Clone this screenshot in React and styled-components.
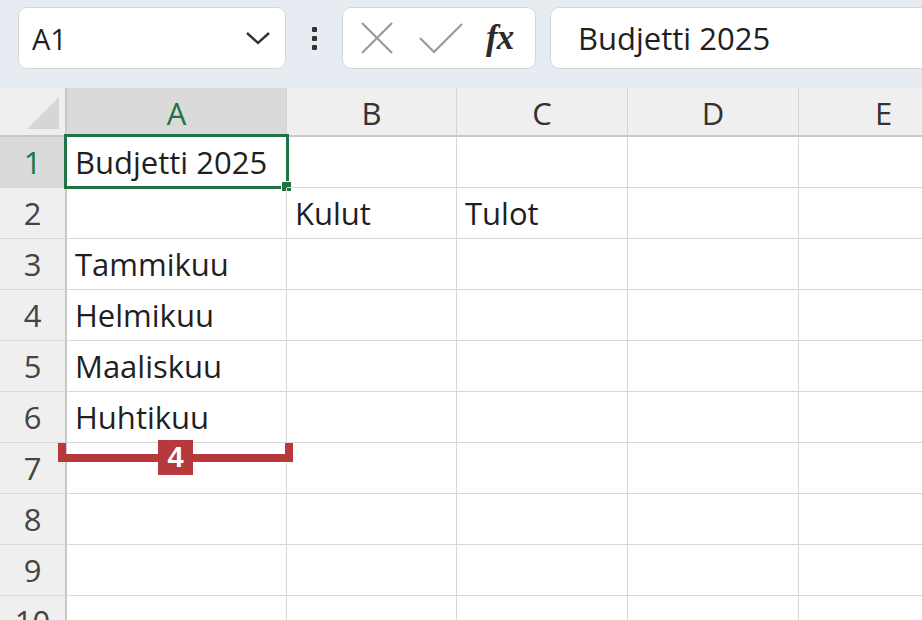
import React from 'react'
import styled, {createGlobalStyle} from 'styled-components'

const GlobalStyle = createGlobalStyle`
    html, body {
        margin: 0;
        padding: 0;
        background: #ffffff;
        overflow: hidden;
    }
    body {
        font-family: "Open Sans", "Lato", sans-serif;
    }
`

const Page = styled.div`
    width: 922px;
    height: 620px;
    overflow: hidden;
    position: relative;
    background: #ffffff;
`

const Toolbar = styled.div`
    height: 88px;
    background: #e6ecf1;
    display: flex;
    align-items: flex-start;
    padding: 7px 0 0 18px;
    box-sizing: border-box;
`

const Box = styled.div`
    height: 62px;
    width: ${props => props.width};
    flex: ${props => props.grow ? '1' : 'none'};
    box-sizing: border-box;
    background: #ffffff;
    border: 1px solid #d3d8dc;
    border-radius: ${props => props.grow ? '9px 0 0 9px' : '9px'};
    border-right: ${props => props.grow ? 'none' : '1px solid #d3d8dc'};
    display: flex;
    align-items: center;
    padding: ${props => props.pad || '0'};
`

const NameText = styled.span`
    font-size: 29px;
    color: #1f1f1f;
    flex: 1;
`

const Dots = styled.div`
    width: 56px;
    display: flex;
    flex-direction: column;
    align-items: center;
    justify-content: center;
    gap: 4px;
    height: 62px;

    span {
        width: 5px;
        height: 5px;
        background: #333;
        border-radius: 1px;
    }
`

const FxText = styled.span`
    font-family: "Liberation Serif", "DejaVu Serif", serif;
    font-style: italic;
    font-weight: bold;
    font-size: 35px;
    color: #2a2a2a;
    margin-left: 22px;
    letter-spacing: -1px;
`

const FormulaText = styled.span`
    font-size: 31px;
    color: #1f1f1f;
`

const Sheet = styled.div`
    display: grid;
    grid-template-columns: 67px 220px 170px 171px 171px 170px;
    grid-template-rows: 49px repeat(10, 51px);
`

const Corner = styled.div`
    background: #efefef;
    border-right: 2px solid #c8c8c8;
    border-bottom: 2px solid #c8c8c8;
    box-sizing: border-box;
    position: relative;

    &::after {
        content: "";
        position: absolute;
        right: 6px;
        bottom: 6px;
        width: 0;
        height: 0;
        border-left: 32px solid transparent;
        border-bottom: 32px solid #d6d6d6;
    }
`

const ColHead = styled.div`
    background: ${props => props.active ? '#dadada' : '#efefef'};
    color: ${props => props.active ? '#217346' : '#333333'};
    border-right: 1px solid #d4d4d4;
    border-bottom: 2px solid #c8c8c8;
    box-sizing: border-box;
    display: flex;
    align-items: center;
    justify-content: center;
    font-size: 31px;
    padding-top: 2px;
`

const RowHead = styled.div`
    background: ${props => props.active ? '#dadada' : '#efefef'};
    color: ${props => props.active ? '#217346' : '#444444'};
    border-right: 2px solid #c8c8c8;
    border-bottom: 1px solid #d8d8d8;
    box-sizing: border-box;
    display: flex;
    align-items: center;
    justify-content: center;
    font-size: 31px;
`

const Cell = styled.div`
    border-right: 1px solid #d8d8d8;
    border-bottom: 1px solid #d8d8d8;
    box-sizing: border-box;
    display: flex;
    align-items: center;
    padding-left: 8px;
    font-size: 31px;
    color: #1f1f1f;
    white-space: nowrap;
    position: relative;
`

const Selection = styled.div`
    position: absolute;
    left: -3px;
    top: -3px;
    right: -3px;
    bottom: -2px;
    border: 3px solid #217346;
    pointer-events: none;

    &::after {
        content: "";
        position: absolute;
        right: -6px;
        bottom: -6px;
        width: 9px;
        height: 9px;
        background: #217346;
        border: 1px solid #ffffff;
    }
`

const Bracket = styled.div`
    position: absolute;
    left: 58px;
    top: 443px;
    width: 235px;
    height: 19px;
    box-sizing: border-box;
    border: 8px solid #b5393d;
    border-top: none;
`

const Badge = styled.div`
    position: absolute;
    left: 158px;
    top: 440px;
    width: 35px;
    height: 35px;
    background: #b5393d;
    color: #ffffff;
    font-family: "Liberation Sans", Arial, sans-serif;
    font-weight: bold;
    font-size: 29px;
    display: flex;
    align-items: center;
    justify-content: center;
`

const columns = ['A', 'B', 'C', 'D', 'E']

const data = {
    1: {A: 'Budjetti 2025'},
    2: {B: 'Kulut', C: 'Tulot'},
    3: {A: 'Tammikuu'},
    4: {A: 'Helmikuu'},
    5: {A: 'Maaliskuu'},
    6: {A: 'Huhtikuu'},
}

export default function App() {
    const rows = [1, 2, 3, 4, 5, 6, 7, 8, 9, 10]

    return (
        <Page>
            <GlobalStyle/>
            <Toolbar>
                <Box width="268px" pad="0 14px 0 13px">
                    <NameText>A1</NameText>
                    <svg width="26" height="16" viewBox="0 0 26 16">
                        <path d="M2 3 L13 13 L24 3" fill="none" stroke="#333" strokeWidth="2.4"/>
                    </svg>
                </Box>
                <Dots><span/><span/><span/></Dots>
                <Box width="194px" pad="0 0 0 17px">
                    <svg width="34" height="34" viewBox="0 0 34 34">
                        <path d="M2 2 L32 32 M32 2 L2 32" fill="none" stroke="#9a9a9a" strokeWidth="2.2"/>
                    </svg>
                    <svg width="46" height="34" viewBox="0 0 46 34" style={{marginLeft: 24}}>
                        <path d="M2 17 L16 31 L44 3" fill="none" stroke="#9a9a9a" strokeWidth="2.2"/>
                    </svg>
                    <FxText>fx</FxText>
                </Box>
                <div style={{width: 14}}/>
                <Box grow pad="0 0 0 27px">
                    <FormulaText>Budjetti 2025</FormulaText>
                </Box>
            </Toolbar>
            <Sheet>
                <Corner/>
                {columns.map(c => (
                    <ColHead key={c} active={c === 'A'}>{c}</ColHead>
                ))}
                {rows.map(r => (
                    <React.Fragment key={r}>
                        <RowHead active={r === 1}>{r}</RowHead>
                        {columns.map(c => (
                            <Cell key={c}>
                                {data[r] && data[r][c]}
                                {r === 1 && c === 'A' && <Selection/>}
                            </Cell>
                        ))}
                    </React.Fragment>
                ))}
            </Sheet>
            <Bracket/>
            <Badge>4</Badge>
        </Page>
    )
}
